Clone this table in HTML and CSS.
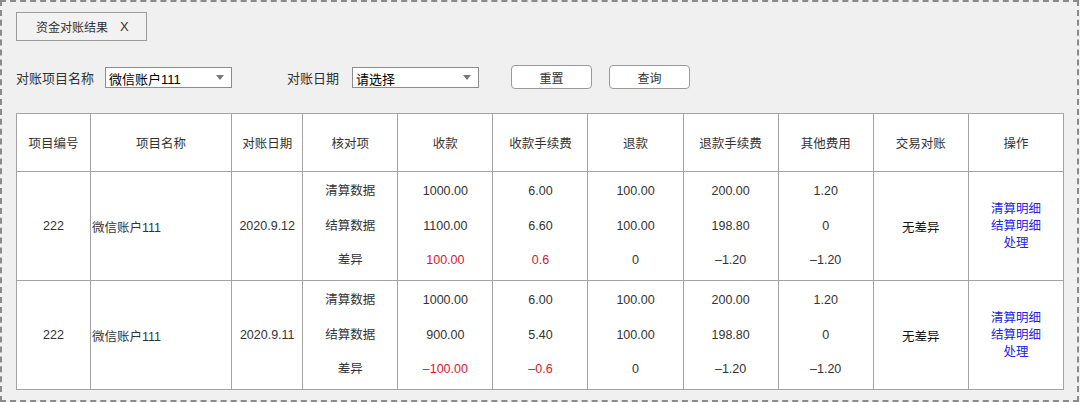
FILE: index.html
```html
<!DOCTYPE html>
<html lang="zh-CN">
<head>
<meta charset="utf-8">
<title>资金对账结果</title>
<link rel="stylesheet" href="styles.css">
</head>
<body>
<div class="frame">
  <div class="tab">资金对账结果<span class="tab-x">X</span></div>

  <div class="filters">
    <span class="label label-name">对账项目名称</span>
    <div class="select select-name"><span>微信账户111</span><i class="caret"></i></div>
    <span class="label label-date">对账日期</span>
    <div class="select select-date"><span>请选择</span><i class="caret"></i></div>
    <button class="btn btn-reset">重置</button>
    <button class="btn btn-query">查询</button>
  </div>

  <table class="grid">
    <colgroup>
      <col class="c-id"><col class="c-name"><col class="c-date"><col class="c-item">
      <col class="c-num"><col class="c-num"><col class="c-num"><col class="c-num"><col class="c-num">
      <col class="c-num"><col class="c-num">
    </colgroup>
    <thead>
      <tr>
        <th>项目编号</th><th>项目名称</th><th>对账日期</th><th>核对项</th><th>收款</th>
        <th>收款手续费</th><th>退款</th><th>退款手续费</th><th>其他费用</th><th>交易对账</th><th>操作</th>
      </tr>
    </thead>
    <tbody>
      <tr>
        <td>222</td>
        <td class="left">微信账户111</td>
        <td>2020.9.12</td>
        <td><div class="stack"><span>清算数据</span><span>结算数据</span><span>差异</span></div></td>
        <td><div class="stack"><span>1000.00</span><span>1100.00</span><span class="red">100.00</span></div></td>
        <td><div class="stack"><span>6.00</span><span>6.60</span><span class="red">0.6</span></div></td>
        <td><div class="stack"><span>100.00</span><span>100.00</span><span>0</span></div></td>
        <td><div class="stack"><span>200.00</span><span>198.80</span><span>–1.20</span></div></td>
        <td><div class="stack"><span>1.20</span><span>0</span><span>–1.20</span></div></td>
        <td class="dark">无差异</td>
        <td><div class="links"><a>清算明细</a><a>结算明细</a><a>处理</a></div></td>
      </tr>
      <tr>
        <td>222</td>
        <td class="left">微信账户111</td>
        <td>2020.9.11</td>
        <td><div class="stack"><span>清算数据</span><span>结算数据</span><span>差异</span></div></td>
        <td><div class="stack"><span>1000.00</span><span>900.00</span><span class="red">–100.00</span></div></td>
        <td><div class="stack"><span>6.00</span><span>5.40</span><span class="red">–0.6</span></div></td>
        <td><div class="stack"><span>100.00</span><span>100.00</span><span>0</span></div></td>
        <td><div class="stack"><span>200.00</span><span>198.80</span><span>–1.20</span></div></td>
        <td><div class="stack"><span>1.20</span><span>0</span><span>–1.20</span></div></td>
        <td class="dark">无差异</td>
        <td><div class="links"><a>清算明细</a><a>结算明细</a><a>处理</a></div></td>
      </tr>
    </tbody>
  </table>
</div>
</body>
</html>
```

FILE: styles.css
```css
* { box-sizing: border-box; }

html, body {
  margin: 0;
  padding: 0;
  background: #f0f0f0;
}

body {
  font-family: "Liberation Sans", "Noto Sans CJK SC", sans-serif;
  color: #333;
}

.frame {
  width: 1079px;
  height: 402px;
  border: 2px dashed #8a8a8a;
  background: #f0f0f0;
  padding: 10px 0 0 14px;
  display: flex;
  flex-direction: column;
  align-items: flex-start;
}

.tab {
  width: 131px;
  height: 29px;
  border: 1px solid #9a9a9a;
  background: #f2f2f2;
  font-size: 12px;
  color: #333;
  display: flex;
  align-items: center;
  padding-left: 19px;
}

.tab-x {
  margin-left: 12px;
  font-size: 13px;
}

.filters {
  margin-top: 24px;
  height: 24px;
  display: flex;
  align-items: center;
  font-size: 13px;
  color: #333;
}

.label-name { width: 89px; }
.label-date { width: 65px; margin-left: 55px; }

.select {
  height: 21px;
  width: 127px;
  background: #fff;
  border: 1px solid #8c8c8c;
  display: flex;
  align-items: center;
  justify-content: space-between;
  padding: 2px 7px 0 3px;
  color: #000;
  font-size: 13px;
}

.caret {
  width: 0;
  height: 0;
  border-left: 4px solid transparent;
  border-right: 4px solid transparent;
  border-top: 5px solid #777;
  margin-top: -2px;
}

.btn {
  height: 24px;
  width: 81px;
  border: 1px solid #9a9a9a;
  border-radius: 4px;
  background: #fff;
  font-family: inherit;
  font-size: 12px;
  color: #333;
  padding: 0;
}

.btn-reset { margin-left: 32px; }
.btn-query { margin-left: 17px; }

.grid {
  margin-top: 24px;
  width: 1048px;
  table-layout: fixed;
  border-collapse: collapse;
  background: #fff;
  font-size: 12.5px;
}

.c-id { width: 74px; }
.c-name { width: 141px; }
.c-date { width: 71px; }
.c-item { width: 95px; }
.c-num { width: 95px; }

.grid th,
.grid td {
  border: 1px solid #a3a3a3;
  text-align: center;
  vertical-align: middle;
  padding: 0;
  color: #333;
  font-weight: normal;
}

.grid thead tr { height: 58px; }
.grid tbody tr { height: 109px; }

.grid td.left {
  text-align: left;
  padding-left: 1px;
}

.grid td.dark { color: #111; }

.stack {
  display: flex;
  flex-direction: column;
  align-items: center;
}

.stack span {
  height: 34.5px;
  line-height: 34.5px;
}

.red { color: #d8142e; }

.links {
  display: flex;
  flex-direction: column;
  align-items: center;
}

.links a {
  color: #2323e0;
  line-height: 17px;
  cursor: pointer;
}
```
